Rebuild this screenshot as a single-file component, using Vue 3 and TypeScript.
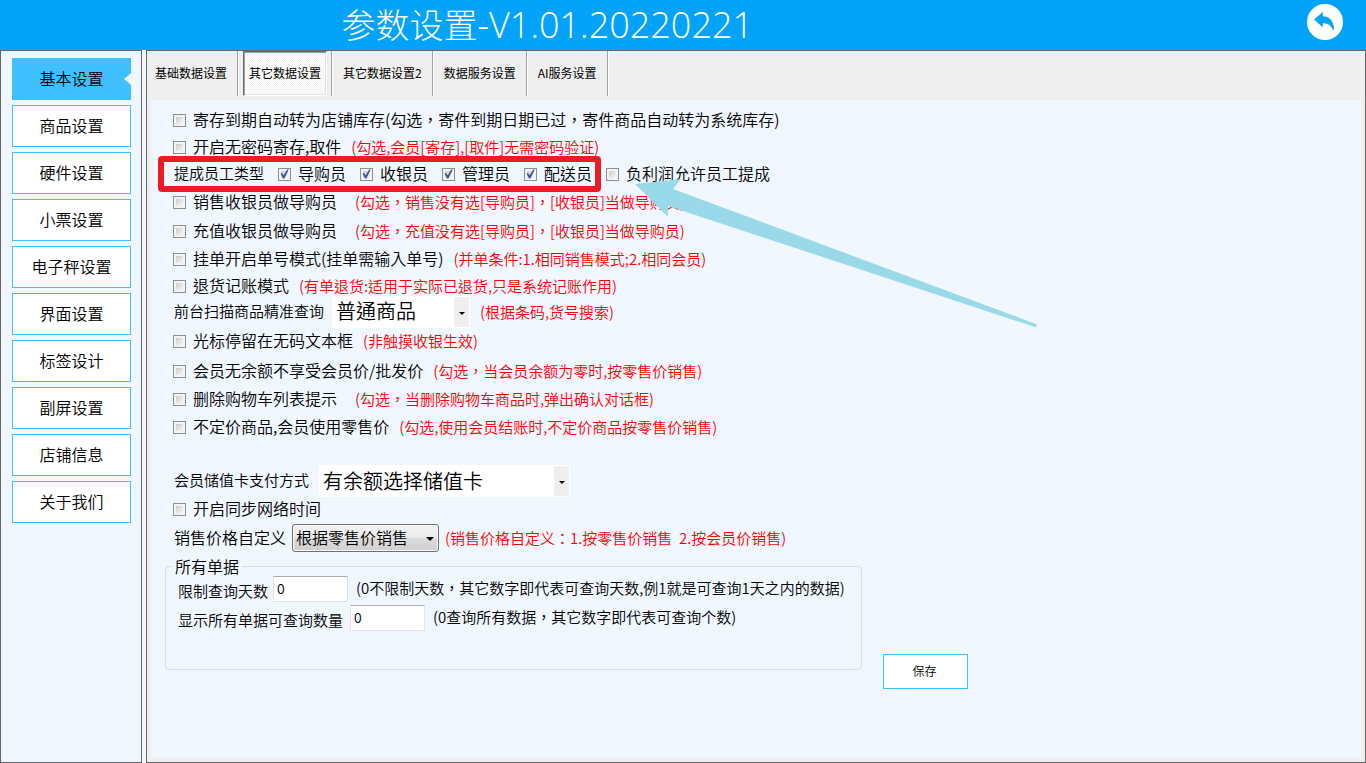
<script setup lang="ts">
import { ref } from 'vue'

interface Option {
  id: string
  label: string
  hint?: string
  wide?: boolean
  size: string
}

const title = '参数设置'
const version = '-V1.01.20220221'
const navItems = [
  '基本设置', '商品设置', '硬件设置', '小票设置', '电子秤设置',
  '界面设置', '标签设计', '副屏设置', '店铺信息', '关于我们',
]
const tabs = ['基础数据设置', '其它数据设置', '其它数据设置2', '数据服务设置', 'AI服务设置']
const activeNav = ref(0)
const activeTab = ref(1)

const depositOptions: Option[] = [
  { id: 'auto-stock', label: '寄存到期自动转为店铺库存(勾选，寄件到期日期已过，寄件商品自动转为系统库存)', size: 'h26' },
  { id: 'no-password', label: '开启无密码寄存,取件', hint: '(勾选,会员[寄存],[取件]无需密码验证)', size: 'h28' },
]
const staffTypes = ['导购员', '收银员', '管理员', '配送员']
const saleOptions: Option[] = [
  { id: 'sale-guide', label: '销售收银员做导购员', hint: '(勾选，销售没有选[导购员]，[收银员]当做导购员)', wide: true, size: 'h30' },
  { id: 'charge-guide', label: '充值收银员做导购员', hint: '(勾选，充值没有选[导购员]，[收银员]当做导购员)', wide: true, size: 'h28' },
  { id: 'hold-number', label: '挂单开启单号模式(挂单需输入单号)', hint: '(并单条件:1.相同销售模式;2.相同会员)', size: 'h28' },
  { id: 'refund-mode', label: '退货记账模式', hint: '(有单退货:适用于实际已退货,只是系统记账作用)', size: 'h26' },
]
const memberOptions: Option[] = [
  { id: 'cursor-stay', label: '光标停留在无码文本框', hint: '(非触摸收银生效)', size: 'h32' },
  { id: 'no-balance', label: '会员无余额不享受会员价/批发价', hint: '(勾选，当会员余额为零时,按零售价销售)', size: 'h28' },
  { id: 'cart-delete', label: '删除购物车列表提示', hint: '(勾选，当删除购物车商品时,弹出确认对话框)', wide: true, size: 'h28' },
  { id: 'unpriced', label: '不定价商品,会员使用零售价', hint: '(勾选,使用会员结账时,不定价商品按零售价销售)', size: 'h28' },
]
const dayLimit = ref('0')
const countLimit = ref('0')
</script>

<template>
  <div class="page">
    <header class="header">
      <h1>{{ title }}<span class="version">{{ version }}</span></h1>
      <button class="back" type="button" aria-label="返回">
        <svg viewBox="0 0 36 36" width="36" height="36">
          <circle cx="18" cy="18" r="18" fill="#fff" />
          <path d="M7 15.500 15.800 8v4.200c6.600.2 11.200 5 11.200 13.400l-1 .4c-1.600-4.400-5-6.800-10.200-6.800v4z" fill="#03a3fa" />
        </svg>
      </button>
    </header>

    <div class="body">
      <nav class="side">
        <button
          v-for="(item, i) in navItems"
          :key="item"
          type="button"
          class="nav"
          :class="{ active: i === activeNav }"
          @click="activeNav = i"
        >{{ item }}</button>
      </nav>

      <main class="main">
        <div class="tabs" role="tablist">
          <div v-for="(tab, i) in tabs" :key="tab" class="tab-cell">
            <button
              type="button"
              role="tab"
              class="tab"
              :class="{ active: i === activeTab }"
              :aria-selected="i === activeTab"
              @click="activeTab = i"
            >{{ tab }}</button>
          </div>
        </div>

        <form class="content" @submit.prevent>
          <div v-for="o in depositOptions" :key="o.id" class="row" :class="[o.size, { wide: o.wide }]">
            <label class="check"><input type="checkbox" /><span>{{ o.label }}</span></label>
            <span v-if="o.hint" class="hint">{{ o.hint }}</span>
          </div>

          <div class="row h26 staff">
            <span class="caption">提成员工类型</span>
            <label v-for="s in staffTypes" :key="s" class="check"><input type="checkbox" checked /><span>{{ s }}</span></label>
            <label class="check"><input type="checkbox" /><span>负利润允许员工提成</span></label>
            <span class="frame" aria-hidden="true"></span>
          </div>

          <div v-for="o in saleOptions" :key="o.id" class="row" :class="[o.size, { wide: o.wide }]">
            <label class="check"><input type="checkbox" /><span>{{ o.label }}</span></label>
            <span class="hint">{{ o.hint }}</span>
          </div>

          <div class="row h26 pick">
            <label class="caption" for="scan">前台扫描商品精准查询</label>
            <span class="select flat scan">
              <select id="scan"><option>普通商品</option></select>
            </span>
            <span class="hint">(根据条码,货号搜索)</span>
          </div>

          <div v-for="o in memberOptions" :key="o.id" class="row" :class="[o.size, { wide: o.wide }]">
            <label class="check"><input type="checkbox" /><span>{{ o.label }}</span></label>
            <span class="hint">{{ o.hint }}</span>
          </div>

          <div class="row h32 pay">
            <label class="caption" for="pay">会员储值卡支付方式</label>
            <span class="select flat card">
              <select id="pay"><option>有余额选择储值卡</option></select>
            </span>
          </div>

          <div class="row h24">
            <label class="check"><input type="checkbox" /><span>开启同步网络时间</span></label>
          </div>

          <div class="row h34 price">
            <label class="caption large" for="price">销售价格自定义</label>
            <span class="select raised">
              <select id="price"><option>根据零售价销售</option></select>
            </span>
            <span class="hint">(销售价格自定义：1.按零售价销售&nbsp; 2.按会员价销售)</span>
          </div>

          <div class="bottom">
            <fieldset>
              <legend>所有单据</legend>
              <div class="field">
                <label for="days">限制查询天数</label>
                <input id="days" v-model="dayLimit" type="text" />
                <span>(0不限制天数，其它数字即代表可查询天数,例1就是可查询1天之内的数据)</span>
              </div>
              <div class="field second">
                <label for="count">显示所有单据可查询数量</label>
                <input id="count" v-model="countLimit" type="text" />
                <span>(0查询所有数据，其它数字即代表可查询个数)</span>
              </div>
            </fieldset>
            <button class="save" type="submit">保存</button>
          </div>

          <svg class="arrow" viewBox="0 0 402 148" width="402" height="148" aria-hidden="true">
            <path d="M0 5 46 0 38 10 401 145Q403 148 400 148L33 27V38Z" fill="#99d9ea" />
          </svg>
        </form>
      </main>
    </div>
  </div>
</template>

<style>
body {
  margin: 0;
  background: #f0f7ff;
}
</style>

<style scoped>
.page {
  min-height: 100vh;
  display: flex;
  flex-direction: column;
  background: #f0f7ff;
  color: #000;
  font-family: "Noto Sans CJK TC", "Noto Sans CJK SC", sans-serif;
  font-size: 16px;
  font-weight: 350;
  box-sizing: border-box;
}
.page *,
.page *::before,
.page *::after {
  box-sizing: border-box;
}
button,
select,
input {
  font: inherit;
  color: inherit;
  margin: 0;
}
.header {
  height: 50px;
  display: flex;
  align-items: center;
  justify-content: space-between;
  padding: 0 23px 0 25%;
  background: #03a3fa;
  color: #fff;
}
h1 {
  margin: 0;
  font-family: "Open Sans", "Noto Sans CJK TC", sans-serif;
  font-size: 34px;
  line-height: 50px;
  font-weight: 300;
  white-space: nowrap;
}
.version {
  font-size: 36px;
}
.back {
  width: 36px;
  height: 36px;
  margin-bottom: 6px;
  padding: 0;
  border: 0;
  border-radius: 50%;
  background: none;
}
.back svg {
  display: block;
}
.body {
  flex: 1;
  display: flex;
  gap: 4px;
}
.side {
  width: 142px;
  flex: none;
  display: flex;
  flex-direction: column;
  gap: 5px;
  padding: 7px 10px 7px 11px;
  border: 1px solid #666;
}
.nav {
  position: relative;
  height: 42px;
  padding: 0 0 2px;
  border: 1px solid #40bfff;
  background: #fff;
  line-height: 24px;
}
.nav.active {
  background: #40bfff;
}
.nav.active::after {
  content: "";
  position: absolute;
  right: -1px;
  top: 14px;
  border: 6px solid transparent;
  border-left-width: 0;
  border-right: 7px solid #f0f7ff;
}
.main {
  flex: 1;
  min-width: 0;
  display: flex;
  flex-direction: column;
  padding: 0 4px 4px;
  border: 1px solid #666;
  background: #efefef;
}
.tabs {
  display: flex;
  height: 45px;
  margin-bottom: 4px;
}
.tab-cell {
  display: flex;
  padding: 0 4px 0 5px;
  border-right: 1px solid #a0a0a0;
  box-shadow: 1px 0 #fff;
}
.tab-cell:first-child {
  padding-left: 0;
}
.tab {
  padding: 0 5px 2px;
  border: 1px solid transparent;
  background: none;
  font-family: "Noto Sans CJK SC", sans-serif;
  font-size: 12px;
  line-height: 16px;
  font-weight: 400;
  white-space: nowrap;
}
.tab-cell:first-child .tab {
  padding-left: 3px;
}
.tab.active {
  padding-top: 1px;
  border-color: #696969 #fff #fff #696969;
  box-shadow: inset 1px 1px #a0a0a0, inset -1px -1px #e3e3e3;
  background: repeating-conic-gradient(#fff 0 25%, #f0f0f0 0 50%) 0 0 / 2px 2px;
}
.content {
  position: relative;
  flex: 1;
  padding: 7px 14px 20px;
  background: #f0f7ff;
}
.row {
  display: flex;
  align-items: center;
  gap: 10px;
  padding-left: 8px;
  white-space: nowrap;
  line-height: 24px;
}
.h24 { height: 24px; }
.h26 { height: 26px; }
.h28 { height: 28px; }
.h30 { height: 30px; }
.h32 { height: 32px; }
.h34 { height: 34px; }
.wide {
  gap: 18px;
}
.check {
  display: flex;
  align-items: center;
  gap: 7px;
}
.check span {
  padding-bottom: 2px;
}
.check input {
  appearance: none;
  width: 13px;
  height: 13px;
  border: 1px solid #8e8f8f;
  background: linear-gradient(135deg, #c8ccd2, #f8f8f8) 2px 2px / 7px 7px no-repeat #f4f4f4;
}
.check input:checked::after {
  content: "";
  display: block;
  width: 11px;
  height: 11px;
  background: #40589b;
  clip-path: polygon(14% 46%, 27% 42%, 42% 62%, 74% 8%, 88% 10%, 49% 92%, 36% 92%);
}
.hint {
  color: #f00;
  font-size: 15px;
}
.caption {
  padding: 0 1px 2px;
  font-size: 15px;
}
.caption.large {
  font-size: 16px;
}
.staff {
  position: relative;
  gap: 13px;
}
.staff .check {
  padding-right: 1px;
}
.frame {
  position: absolute;
  left: -7px;
  top: -5px;
  width: 443px;
  height: 36px;
  border: 6px solid #ed1c24;
  border-radius: 4px;
}
.pick {
  gap: 7px;
}
.pick .hint {
  padding-left: 3px;
}
.pay {
  gap: 9px;
}
.price {
  gap: 6px;
}
.price .caption {
  padding-right: 0;
}
.select {
  position: relative;
  display: flex;
}
.select select {
  appearance: none;
  width: 100%;
  border: 0;
  border-radius: 0;
  padding: 0 20px 0 4px;
  background: transparent;
}
.select::after {
  content: "";
  position: absolute;
  right: 5px;
  top: 50%;
  border: 3px solid transparent;
  border-top-color: #000;
  border-bottom-width: 0;
  pointer-events: none;
}
.flat {
  height: 32px;
  background: linear-gradient(#efefef, #efefef) right 1px top 1px / 15px 30px no-repeat #fff;
  font-size: 20px;
}
.scan {
  width: 138px;
}
.scan select {
  padding-bottom: 2px;
}
.card {
  width: 251px;
}
.pay {
  margin-top: 24px;
}
.raised {
  width: 147px;
  height: 28px;
  border: 1px solid #707070;
  border-radius: 3px;
  background: linear-gradient(#f2f2f2, #ebebeb 50%, #dddddd 50%, #cfcfcf);
  box-shadow: inset 0 0 0 1px #fafafa;
}
.raised select {
  padding-bottom: 2px;
  padding-left: 3px;
}
.raised::after {
  right: 4px;
  border-width: 4px 4px 0;
  margin-top: -1px;
}
.bottom {
  display: flex;
  align-items: flex-end;
  gap: 21px;
  padding-top: 1px;
}
fieldset {
  flex: 0 1 697px;
  min-width: 0;
  height: 114px;
  margin: 0 0 19px;
  padding: 0 12px;
  border: 1px solid #d5dfe5;
  border-radius: 4px;
}
legend {
  margin-left: -6px;
  padding: 0 3px;
  line-height: 20px;
}
.field {
  display: flex;
  align-items: center;
  gap: 5px;
  height: 25px;
  font-size: 15px;
  line-height: 24px;
  white-space: nowrap;
}
.field.second {
  margin-top: 4px;
  gap: 7px;
}
.field label {
  padding-top: 4px;
}
.field input {
  width: 75px;
  height: 26px;
  padding: 0 3px 2px;
  border: 1px solid #e2e3ea;
  border-top-color: #abadb3;
  background: #fff;
  font-size: 14px;
}
.field span {
  padding: 0 0 1px 3px;
}
.field.second span {
  padding-left: 1px;
}
.save {
  width: 85px;
  height: 35px;
  padding: 0 2px 2px 0;
  border: 1px solid #40bfff;
  background: #fff;
  font-size: 12px;
  line-height: 16px;
}
.arrow {
  position: absolute;
  left: 484px;
  top: 79px;
  pointer-events: none;
}
</style>
